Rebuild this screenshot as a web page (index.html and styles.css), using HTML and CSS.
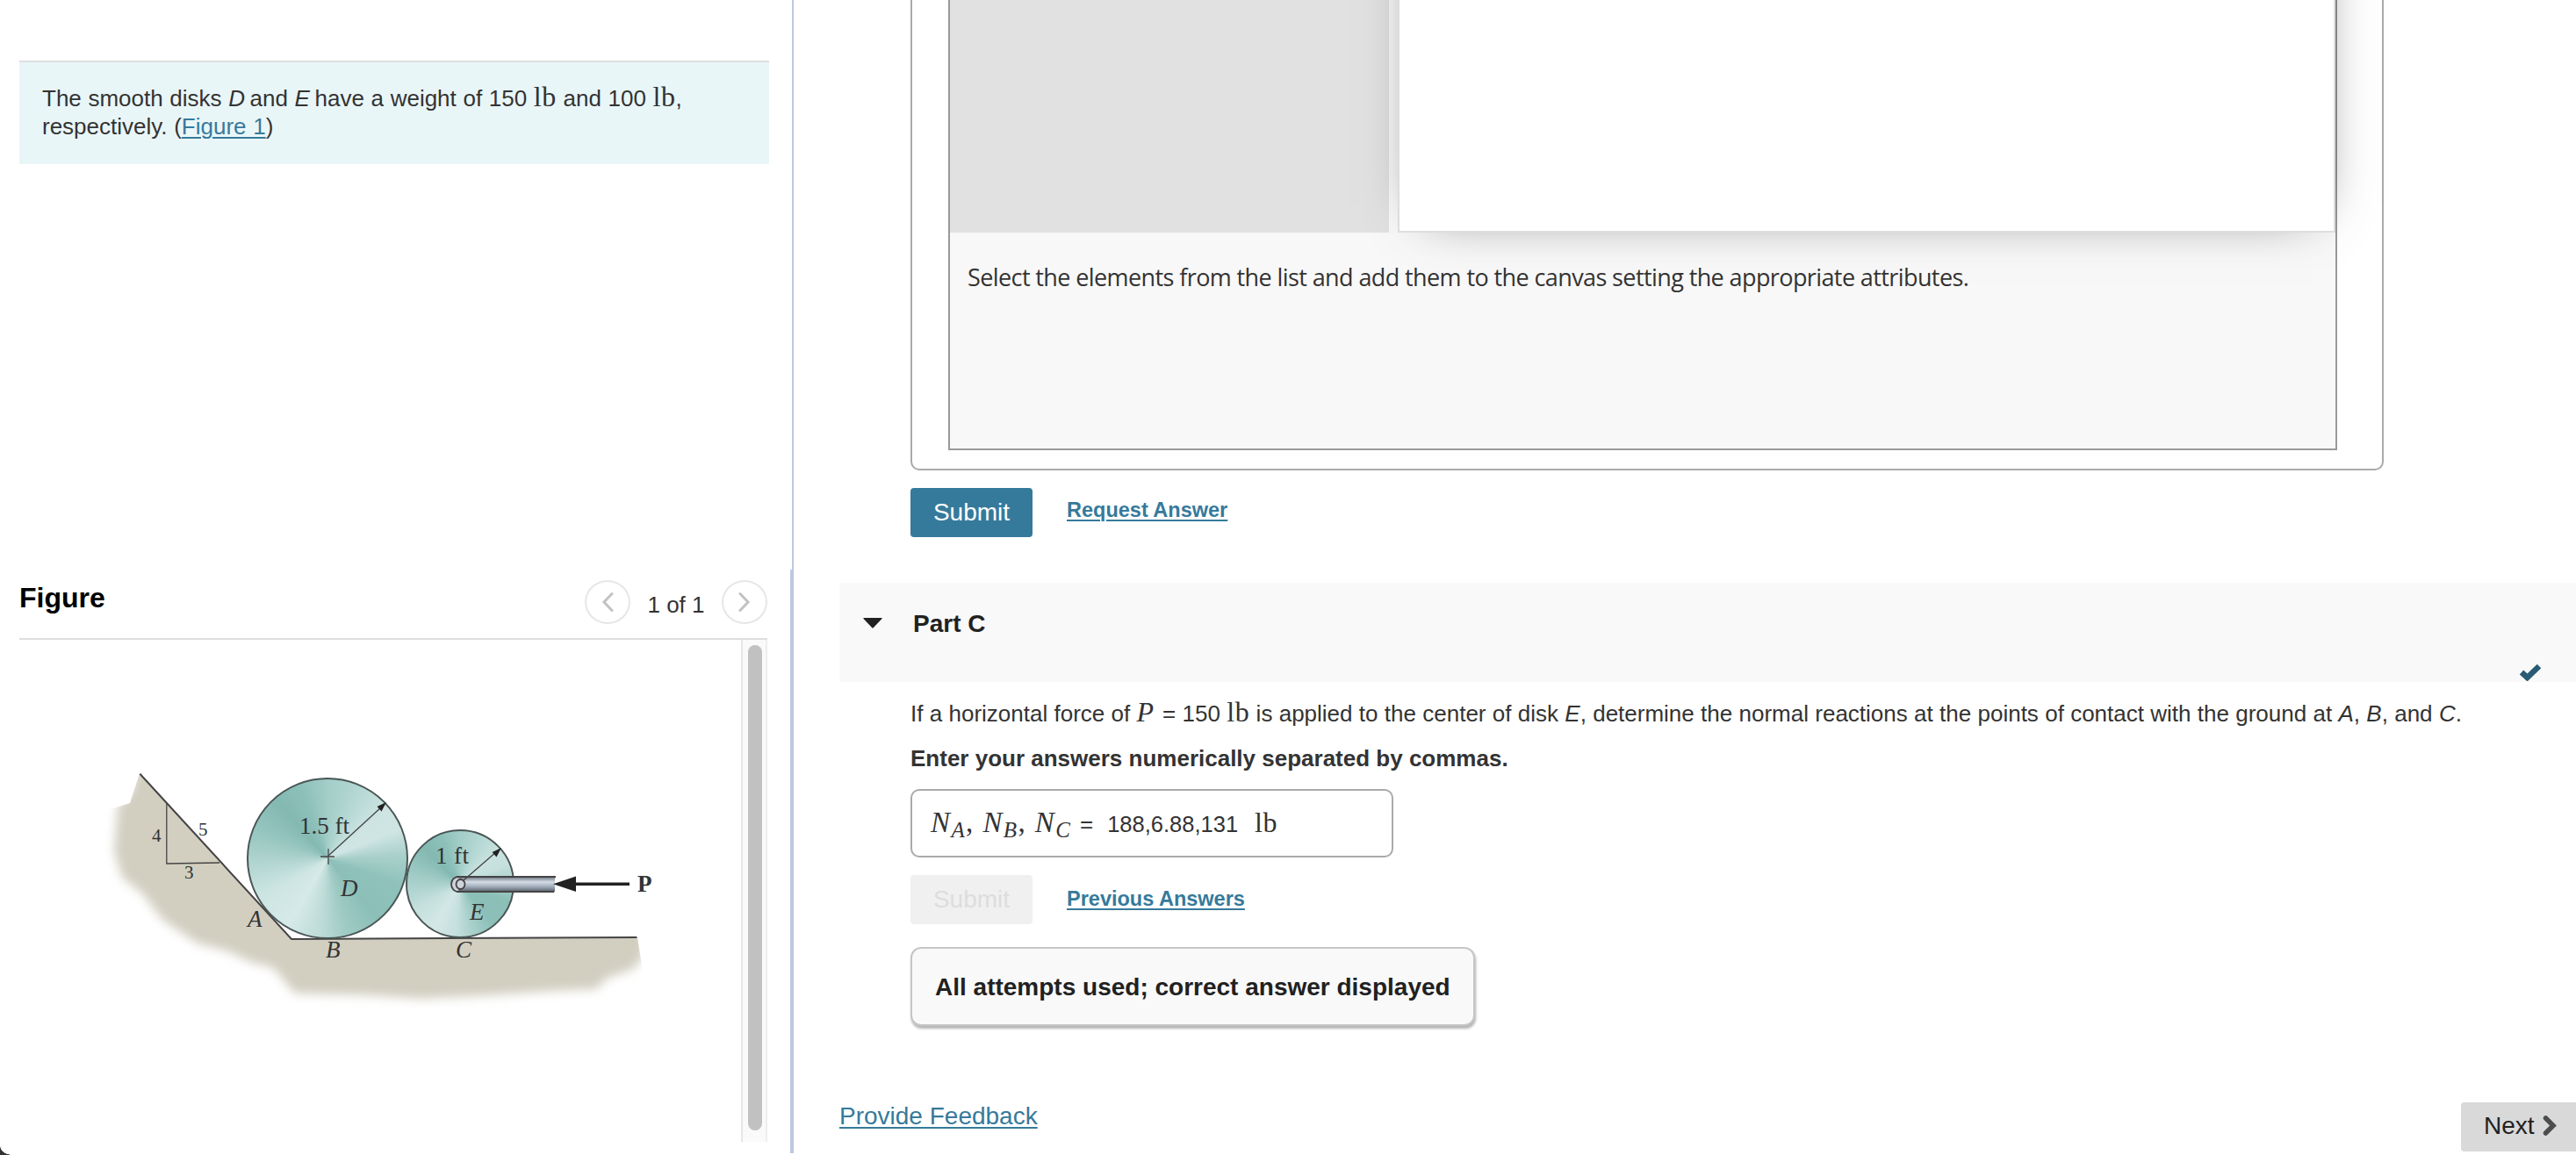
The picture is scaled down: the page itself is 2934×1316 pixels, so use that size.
FILE: index.html
```
<!DOCTYPE html>
<html lang="en">
<head>
    <meta charset="UTF-8">
    <meta name="viewport" content="width=device-width, initial-scale=1.0">
    <title>Equilibrium of Smooth Disks</title>
    <link rel="stylesheet" href="styles.css">
</head>
<body>
    <div class="page">
        <aside class="left">
            <div class="left-top">
                <div class="intro">
                    The smooth disks <i class="tight">D</i> and <i class="tight">E</i> have a weight of 150 <span class="math">lb</span> and 100 <span class="math">lb</span>,<br>
                    respectively. (<a href="#figure">Figure 1</a>)
                </div>
            </div>
            <div class="left-bottom" id="figure">
                <div class="figure-head">
                    <h2>Figure</h2>
                    <div class="pager">
                        <button class="round"><svg width="14" height="24" viewBox="0 0 14 24"><path d="M12 2.500 L3 12 L12 21.500"/></svg></button>
                        <span>1 of 1</span>
                        <button class="round"><svg width="14" height="24" viewBox="0 0 14 24"><path d="M2 2.500 L11 12 L2 21.500"/></svg></button>
                    </div>
                </div>
                <div class="figure-body">
                    <svg class="drawing" width="822" height="572" viewBox="22 729 822 572">
                        <defs>
                            <filter id="soft" x="-10%" y="-10%" width="120%" height="130%"><feGaussianBlur stdDeviation="6"/></filter>
                            <clipPath id="earth"><path d="M159 881 L332 1070 L726 1068 L731 1100 L731 1200 L100 1200 L100 930 L148 915 Z"/></clipPath>
                            <linearGradient id="rod" x1="0" y1="0" x2="0" y2="1">
                                <stop offset="0" stop-color="#6b7480"/>
                                <stop offset="0.35" stop-color="#d5dce6"/>
                                <stop offset="0.65" stop-color="#a4afbd"/>
                                <stop offset="1" stop-color="#59616c"/>
                            </linearGradient>
                        </defs>
                        <g clip-path="url(#earth)">
                            <path class="ground" filter="url(#soft)" d="M159 860 L335 1050 L735 1050 L734 1088 L722 1104 L690 1115 L680 1127 L630 1129 L560 1134 L480 1138 L420 1134 L336 1132 L322 1116 L312 1103 L285 1096 L260 1084 L225 1075 L185 1048 L162 1018 L139 1000 L130 970 L134 918 L150 900 Z"/>
                        </g>
                        <path class="line" d="M159.4 881.7 L332 1070 L725.4 1068"/>
                        <path class="thin" d="M189.8 916 V984 L250 983"/>
                        <foreignObject x="281" y="886" width="184" height="184"><div class="disk disk-d"></div></foreignObject>
                        <foreignObject x="462" y="945" width="124" height="124"><div class="disk disk-e"></div></foreignObject>
                        <path class="thin" d="M374 967 V985 M365 976 H381"/>
                        <path class="thin" d="M374 975 L435 919"/>
                        <path class="head" d="M440 914 L434.500 924.500 L429.500 919 Z"/>
                        <rect x="520" y="999" width="112" height="17" fill="url(#rod)"/>
                        <path class="line" d="M520 999 H633 M520 1016 H631"/>
                        <path class="pin" d="M522 999 A8 8.500 0 0 0 522 1016"/>
                        <ellipse class="pin" cx="524.500" cy="1007.500" rx="5" ry="5.500"/>
                        <path class="thin" d="M528 1003 L566 970"/>
                        <path class="head" d="M571 966 L565.500 976.500 L560.500 971 Z"/>
                        <path class="force" d="M650 1007.300 H717"/>
                        <path class="head" d="M630 1007.300 L656 998.500 V1016 Z"/>
                        <g class="label">
                            <text x="341" y="950" textLength="57">1.5 ft</text>
                            <text x="496" y="984" textLength="38">1 ft</text>
                        </g>
                        <g class="label small">
                            <text x="173" y="959">4</text>
                            <text x="226" y="952">5</text>
                            <text x="210" y="1001">3</text>
                        </g>
                        <g class="label italic">
                            <text x="388" y="1021">D</text>
                            <text x="535" y="1048">E</text>
                            <text x="282" y="1056">A</text>
                            <text x="371" y="1091">B</text>
                            <text x="519" y="1091">C</text>
                        </g>
                        <text class="label bold" x="726" y="1016">P</text>
                    </svg>
                    <div class="scrollbar"><div class="thumb"></div></div>
                </div>
            </div>
        </aside>

        <main class="right">
            <section class="part-b">
                <div class="canvas-box">
                    <div class="canvas-app">
                        <div class="canvas-row">
                            <div class="element-list"></div>
                            <div class="canvas"></div>
                        </div>
                        <p class="hint">Select the elements from the list and add them to the canvas setting the appropriate attributes.</p>
                    </div>
                </div>
                <div class="actions">
                    <button class="submit">Submit</button>
                    <a href="#">Request Answer</a>
                </div>
            </section>

            <section class="part-c">
                <div class="part-head">
                    <svg class="caret" width="22" height="12" viewBox="0 0 22 12"><path d="M1 0 H21 Q22.500 0 21 1.500 L12 11 Q11 12 10 11 L1 1.500 Q-0.500 0 1 0 Z"/></svg>
                    <h3>Part C</h3>
                    <svg class="check" width="26" height="20" viewBox="0 0 26 20"><path d="M3 10 L9.500 16 L23 3"/></svg>
                </div>
                <div class="part-body">
                    <p class="question">If a horizontal force of <i class="math force-var">P</i> = 150 <span class="math">lb</span> is applied to the center of disk <i>E</i>, determine the normal reactions at the points of contact with the ground at <i>A</i>, <i>B</i>, and <i>C</i>.</p>
                    <p class="instruction">Enter your answers numerically separated by commas.</p>
                    <div class="answer">
                        <span class="vars"><i>N<sub>A</sub></i>, <i>N<sub>B</sub></i>, <i>N<sub>C</sub></i></span>
                        <span class="equals">=</span>
                        <span class="value">188,6.88,131</span>
                        <span class="math">lb</span>
                    </div>
                    <div class="actions">
                        <button class="submit disabled" disabled>Submit</button>
                        <a class="previous" href="#">Previous Answers</a>
                    </div>
                    <div class="notice">All attempts used; correct answer displayed</div>
                </div>
            </section>

            <footer class="foot">
                <a href="#">Provide Feedback</a>
                <button class="next">Next <svg width="16" height="26" viewBox="0 0 16 26"><path d="M3.500 4 L12 12.500 L3.500 21"/></svg></button>
            </footer>
        </main>
    </div>
    <div class="window-corner"></div>
</body>
</html>
```
FILE: styles.css
```
* {
    box-sizing: border-box;
}
body {
    margin: 0;
    background-color: #fff;
    color: #333;
    font-family: "Liberation Sans", Arial, sans-serif;
    font-size: 26px;
    overflow: hidden;
}
h2, h3, p {
    margin: 0;
}
a {
    color: #367a9b;
    text-decoration: underline;
    text-decoration-thickness: 2px;
    text-underline-offset: 3px;
}
button {
    font-family: inherit;
    border: none;
    padding: 0;
}
.math {
    font-family: "Liberation Serif", "Times New Roman", serif;
    font-size: 32px;
    line-height: 1;
    letter-spacing: 0.6px;
}
.force-var {
    margin-right: 2px;
}
.tight {
    margin-right: -2px;
}
.page {
    display: flex;
    height: 1316px;
}

/* left column */
.left {
    width: 904px;
    display: flex;
    flex-direction: column;
}
.left-top {
    height: 649px;
    padding: 69px 26px 0 22px;
    border-right: 2px solid #bccadf;
}
.intro {
    height: 118px;
    padding: 25px 26px;
    background-color: #e9f6f8;
    border-top: 2px solid #dedede;
    line-height: 32px;
    word-spacing: 0.4px;
    white-space: nowrap;
}
.intro .math {
    line-height: 0;
}
.left-bottom {
    height: 665px;
    padding: 0 26px 0 22px;
    border-right: 4px solid #bccadf;
}
.figure-head {
    display: flex;
    justify-content: space-between;
    height: 80px;
    border-bottom: 2px solid #dedede;
}
.figure-head h2 {
    padding-top: 14px;
    font-size: 32px;
    line-height: 37px;
    color: #000;
}
.pager {
    display: flex;
    align-items: flex-start;
    padding-top: 12px;
}
.pager span {
    width: 104px;
    padding-top: 13px;
    line-height: 30px;
    text-align: center;
}
.round {
    display: flex;
    align-items: center;
    justify-content: center;
    width: 52px;
    height: 50px;
    border: 2px solid #e6e6e6;
    border-radius: 50%;
    background-color: #fff;
}
.round path {
    fill: none;
    stroke: #c2c2c2;
    stroke-width: 3;
    stroke-linecap: round;
}
.figure-body {
    display: flex;
    height: 572px;
}
.drawing {
    flex: 1;
}
.scrollbar {
    width: 30px;
    padding: 6px 4px 13px 6px;
    background-color: #fafafa;
    border-left: 2px solid #e6e6e6;
    border-right: 2px solid #eee;
}
.thumb {
    width: 16px;
    height: 553px;
    border-radius: 8px;
    background-color: #c1c1c1;
}

/* figure drawing */
.ground {
    fill: #d2cfc1;
}
.line {
    fill: none;
    stroke: #444;
    stroke-width: 2;
}
.thin {
    fill: none;
    stroke: #444;
    stroke-width: 1.3;
}
.head {
    fill: #222;
}
.force {
    stroke: #222;
    stroke-width: 3.5;
}
.pin {
    fill: #cfd3dc;
    stroke: #444;
    stroke-width: 1.8;
}
.disk {
    width: 100%;
    height: 100%;
    border: 2px solid #4a5656;
    border-radius: 50%;
}
.disk-d {
    background: conic-gradient(#a3cdc8 0deg, #b5d8d4 25deg, #cde4e2 50deg, #cfe5e3 68deg, #a9d0cb 88deg, #8fc2bb 110deg, #8bbfb8 140deg, #9fcac4 165deg, #bddbd7 185deg, #d6eae8 210deg, #cde5e2 240deg, #b3d6d2 265deg, #98c6c0 290deg, #83b9b2 318deg, #8dc0ba 340deg, #a3cdc8 360deg);
}
.disk-e {
    background: conic-gradient(#a3cdc8 0deg, #b5d8d4 25deg, #c9e2df 50deg, #c5e0dd 68deg, #a9d0cb 88deg, #8bbfb8 110deg, #8bbfb8 140deg, #a9d0cb 165deg, #c5e0dd 185deg, #d3e8e6 210deg, #c5e0dd 240deg, #aed3cf 265deg, #98c6c0 290deg, #83b9b2 315deg, #8dc0ba 338deg, #a3cdc8 360deg);
}
.label {
    fill: #333;
    font-family: "Liberation Serif", "Times New Roman", serif;
    font-size: 27px;
}
.small {
    font-size: 21px;
}
.italic {
    font-style: italic;
}
.bold {
    font-weight: bold;
}

/* right column */
.right {
    flex: 1;
    display: flex;
    flex-direction: column;
    padding-left: 52px;
}
.part-b {
    height: 664px;
    padding-left: 81px;
}
.canvas-box {
    width: 1678px;
    height: 536px;
    padding: 0 51px 21px 41px;
    border: 2px solid #aaa;
    border-top: none;
    border-radius: 0 0 10px 10px;
}
.canvas-app {
    width: 1582px;
    height: 513px;
    border: 2px solid #999;
    border-top: none;
    background-color: #f8f8f8;
}
.canvas-row {
    display: flex;
    justify-content: space-between;
    height: 265px;
}
.element-list {
    width: 500px;
    background-color: #e1e1e1;
}
/* runs on above the top of the window */
.canvas {
    width: 1068px;
    margin-top: -200px;
    background-color: #fff;
    border: 2px solid #ddd;
    box-shadow: 2px 0 60px -30px rgba(0, 0, 0, 0.7);
}
.hint {
    padding: 32px 0 0 20px;
    font-family: "Open Sans", "Noto Sans", sans-serif;
    font-size: 27px;
    line-height: 38px;
    letter-spacing: -0.6px;
    white-space: nowrap;
}
.actions {
    display: flex;
    align-items: flex-start;
    gap: 39px;
    padding-top: 20px;
}
.actions a {
    padding-top: 12px;
    font-size: 23.5px;
    line-height: 27px;
    font-weight: bold;
}
.actions .previous {
    padding-top: 14px;
}
.submit {
    width: 139px;
    height: 56px;
    border-radius: 4px;
    background-color: #367a9b;
    color: #fff;
    font-size: 28px;
}
.disabled {
    background-color: #f0f0f0;
    color: #ddd;
}
.part-head {
    display: flex;
    height: 113px;
    padding-left: 27px;
    background-color: #f9f9f9;
}
.caret {
    margin-top: 40px;
    fill: #212121;
}
.part-head h3 {
    margin: 31px 0 0 35px;
    font-size: 28px;
    line-height: 32px;
    color: #212121;
}
.check {
    margin: 92px 39px 0 auto;
}
.check path {
    fill: none;
    stroke: #285c73;
    stroke-width: 6.5;
}
.part-body {
    padding: 18px 0 0 81px;
}
.question {
    height: 36px;
    line-height: 36px;
    word-spacing: 0.07px;
    white-space: nowrap;
}
.instruction {
    padding-top: 18px;
    font-weight: bold;
    line-height: 30px;
}
.answer {
    display: flex;
    align-items: baseline;
    width: 550px;
    height: 78px;
    margin-top: 20px;
    padding: 18px 21px 0;
    border: 2px solid #aaa;
    border-radius: 10px;
}
.vars {
    width: 164px;
    font-family: "Liberation Serif", "Times New Roman", serif;
    font-size: 33px;
    line-height: 36px;
    letter-spacing: 1.4px;
    white-space: nowrap;
}
.vars sub {
    font-size: 25px;
    line-height: 0;
    vertical-align: -6px;
}
.equals {
    margin-left: 6px;
}
.value {
    margin: 0 19px 0 16px;
    font-size: 25.5px;
}
.notice {
    width: 643px;
    height: 90px;
    margin-top: 26px;
    padding: 26px;
    border: 2px solid #c6c6c6;
    border-radius: 12px;
    background-color: #f9f9f9;
    box-shadow: 1px 3px 3px rgba(0, 0, 0, 0.3);
    color: #212121;
    font-size: 28px;
    font-weight: bold;
    line-height: 36px;
    white-space: nowrap;
}
.foot {
    display: flex;
    justify-content: space-between;
    margin-top: auto;
    padding-bottom: 4px;
    font-size: 28px;
}
.next {
    display: flex;
    align-items: center;
    gap: 9px;
    width: 131px;
    height: 56px;
    padding: 0 0 2px 26px;
    border-radius: 4px 0 0 4px;
    background-color: #d9d9d9;
    color: #212121;
    font-size: 28px;
}
.next path {
    fill: none;
    stroke: #4d4d4d;
    stroke-width: 5.5;
    stroke-linecap: round;
}
.window-corner {
    position: absolute;
    left: 0;
    bottom: 0;
    width: 14px;
    height: 10px;
    background: radial-gradient(14px 10px at 100% 0, transparent 96%, #333 100%);
}
```
